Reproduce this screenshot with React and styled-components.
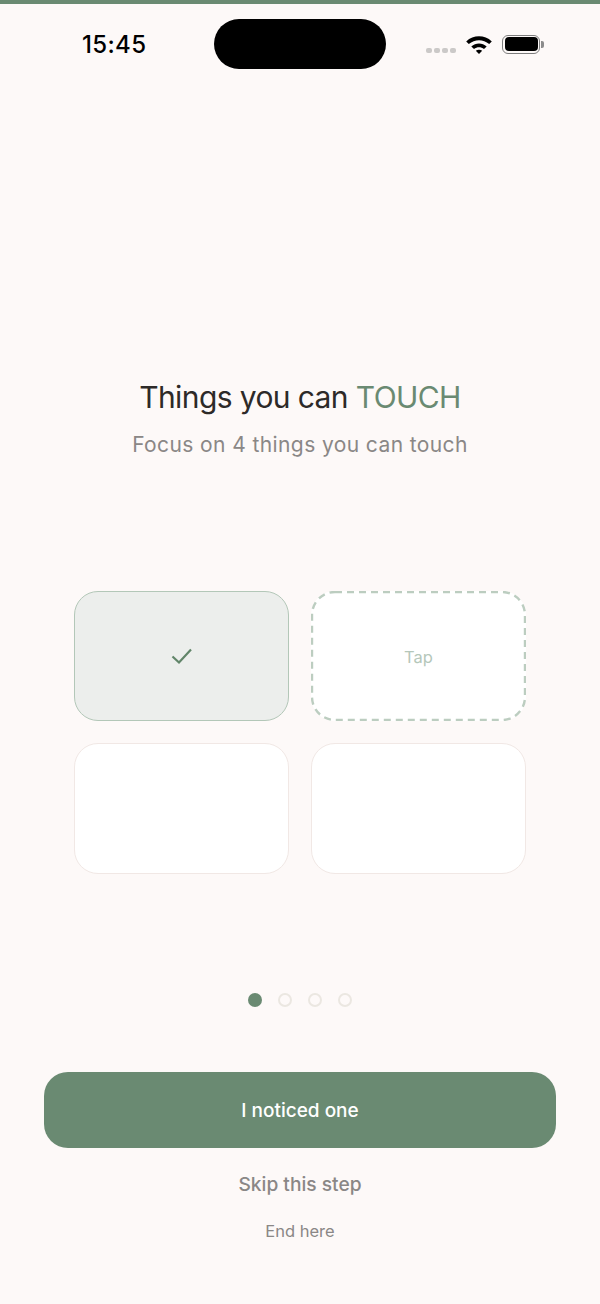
import styled, { createGlobalStyle } from "styled-components";

const GlobalStyle = createGlobalStyle`
  html, body {
    margin: 0;
    padding: 0;
    background: #fdf9f8;
  }
  * { box-sizing: border-box; }
`;

const CARDS = ["done", "active", "idle", "idle"];
const DOTS = [true, false, false, false];

export default function App() {
  return (
    <Page>
      <GlobalStyle />
      <TopBar />
      <StatusBar>
        <Time>15:45</Time>
        <Island />
        <StatusIcons>
          <Signal>
            <i /><i /><i /><i />
          </Signal>
          <svg width="26" height="20" viewBox="1 0 26 20">
            <path d="M1.2 7.4C8.4 .6 19.6 .6 26.8 7.4L24.2 10.1C18.2 4.8 9.8 4.8 3.8 10.1Z" fill="#000" />
            <path d="M6.3 12.5C10.8 8.4 17.2 8.4 21.7 12.5L19 15.1C16.1 12.6 11.9 12.6 9 15.1Z" fill="#000" />
            <path d="M10.8 16.8C12.7 15.3 15.3 15.3 17.2 16.8L14 20Z" fill="#000" />
          </svg>
          <Battery>
            <BatteryBody><BatteryFill /></BatteryBody>
            <BatteryCap />
          </Battery>
        </StatusIcons>
      </StatusBar>
      <Heading>
        <Title>Things you can <Accent>TOUCH</Accent></Title>
        <Subtitle>Focus on 4 things you can touch</Subtitle>
      </Heading>
      <Grid>
        {CARDS.map((state, i) => (
          <Card key={i} $state={state}>
            {state === "done" && (
              <svg width="24" height="24" viewBox="0 0 24 24" fill="none" stroke="#618569" strokeWidth="2.2">
                <path d="M2.5 12.5L9 18.5L21 5.5" />
              </svg>
            )}
            {state === "active" && (
              <>
                <DashedOutline width="215" height="130" viewBox="0 0 215 130" fill="none">
                  <rect x="1" y="1" width="213" height="128" rx="23" stroke="#bccdc0" strokeWidth="2.4" strokeDasharray="7 5" />
                </DashedOutline>
                <TapLabel>Tap</TapLabel>
              </>
            )}
          </Card>
        ))}
      </Grid>
      <Dots>
        {DOTS.map((on, i) => <Dot key={i} $on={on} />)}
      </Dots>
      <PrimaryButton>I noticed one</PrimaryButton>
      <SkipButton>Skip this step</SkipButton>
      <EndButton>End here</EndButton>
    </Page>
  );
}

const Page = styled.div`
  width: 600px;
  height: 1304px;
  background: #fdf9f8;
  display: flex;
  flex-direction: column;
  align-items: center;
  font-family: Inter, "Liberation Sans", sans-serif;
  overflow: hidden;
`;
const TopBar = styled.div`
  width: 100%;
  height: 4px;
  background: #6a8a72;
`;
const StatusBar = styled.div`
  width: 100%;
  height: 50px;
  margin-top: 15px;
  padding: 0 0 0 82px;
  display: flex;
  align-items: center;
`;
const Time = styled.div`
  width: 132px;
  font-size: 24px;
  font-weight: 500;
  letter-spacing: 0.35px;
  color: #000;
`;
const Island = styled.div`
  width: 172px;
  height: 50px;
  border-radius: 25px;
  background: #000;
`;
const StatusIcons = styled.div`
  display: flex;
  align-items: center;
  margin-left: 40px;
  gap: 10px;
`;
const Signal = styled.div`
  display: flex;
  gap: 2px;
  margin-top: 13px;
  i {
    width: 6px;
    height: 5px;
    border-radius: 2px;
    background: #cbc9c8;
  }
`;
const Battery = styled.div`
  display: flex;
  align-items: center;
  gap: 1px;
`;
const BatteryBody = styled.div`
  width: 38px;
  height: 19px;
  border: 1.5px solid #7d7d7d;
  border-radius: 6px;
  padding: 1.5px;
`;
const BatteryFill = styled.div`
  width: 100%;
  height: 100%;
  background: #000;
  border-radius: 4px;
`;
const BatteryCap = styled.div`
  width: 3px;
  height: 7px;
  background: #8c8c8c;
  border-radius: 0 2px 2px 0;
`;
const Heading = styled.div`
  margin-top: 308px;
  display: flex;
  flex-direction: column;
  align-items: center;
`;
const Title = styled.h1`
  margin: 0;
  font-size: 30px;
  line-height: 40px;
  font-weight: 400;
  color: #2d2a28;
  letter-spacing: -0.6px;
`;
const Accent = styled.span`
  color: #6a8a72;
`;
const Subtitle = styled.p`
  margin: 14px 0 0;
  font-size: 21px;
  line-height: 28px;
  font-weight: 400;
  letter-spacing: 0.4px;
  color: #8a8786;
`;
const Grid = styled.div`
  margin-top: 132px;
  display: grid;
  grid-template-columns: 215px 215px;
  grid-template-rows: 130px 131px;
  gap: 22px;
`;
const Card = styled.div`
  position: relative;
  border-radius: 24px;
  display: flex;
  align-items: center;
  justify-content: center;
  background: ${(p) => (p.$state === "done" ? "#eceeec" : "#fff")};
  border: ${(p) =>
    p.$state === "done"
      ? "1.5px solid #b3c7b8"
      : p.$state === "active"
      ? "none"
      : "1.5px solid #f1e8e5"};
`;
const DashedOutline = styled.svg`
  position: absolute;
  top: 0;
  left: 0;
`;
const TapLabel = styled.span`
  margin-top: 1px;
  font-size: 16.5px;
  color: #b5c7ba;
`;
const Dots = styled.div`
  margin-top: 119px;
  display: flex;
  gap: 16px;
`;
const Dot = styled.span`
  width: 14px;
  height: 14px;
  border-radius: 50%;
  background: ${(p) => (p.$on ? "#6a8a72" : "transparent")};
  border: ${(p) => (p.$on ? "none" : "2.5px solid #ebe7e1")};
`;
const PrimaryButton = styled.button`
  margin-top: 65px;
  width: 512px;
  height: 76px;
  border: none;
  border-radius: 24px;
  background: #6a8a72;
  color: #fff;
  font-family: inherit;
  font-size: 19px;
  font-weight: 450;
`;
const SkipButton = styled.button`
  margin-top: 22px;
  padding: 0;
  height: 28px;
  border: none;
  background: none;
  color: #8a8786;
  font-family: inherit;
  font-size: 19.2px;
  font-weight: 450;
`;
const EndButton = styled.button`
  margin-top: 23px;
  padding: 0;
  height: 20px;
  border: none;
  background: none;
  color: #8a8786;
  font-family: inherit;
  font-size: 16.5px;
`;
